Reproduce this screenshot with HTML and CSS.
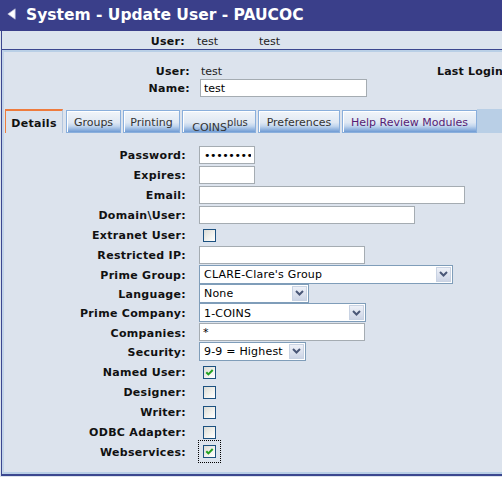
FILE: index.html
```html
<!DOCTYPE html>
<html lang="en">
<head>
<meta charset="utf-8">
<title>System - Update User - PAUCOC</title>
<link rel="stylesheet" href="styles.css">
</head>
<body>
<div class="titlebar">
  <svg class="back" width="9" height="12" viewBox="0 0 9 12"><path d="M8.2 0.8 L8.2 11.2 L0.8 6 Z" fill="#ffffff" stroke="#b8bcd8" stroke-width="0.7"/></svg>
  <h1 class="title">System - Update User - PAUCOC</h1>
</div>
<div class="frame">
  <div class="userbar">
    <span class="lbl">User:</span><span class="val">test</span><span class="val">test</span>
  </div>
  <div class="panel">
    <div class="head">
      <span class="lbl">User:</span><span class="val uval">test</span><span class="lbl">Last Login</span>
      <span class="lbl">Name:</span><span class="cell"><input class="txt w-name" type="text" value="test"></span><span></span>
    </div>
    <div class="tabs">
      <div class="tab active t-details">Details</div>
      <div class="tab t-groups">Groups</div>
      <div class="tab t-printing">Printing</div>
      <div class="tab t-coins"><span class="coins">COINS<sup class="plus">plus</sup></span></div>
      <div class="tab t-pref">Preferences</div>
      <div class="tab t-help">Help Review Modules</div>
      <div class="tabfill"></div>
    </div>
    <div class="form">
      <span class="lbl">Password:</span><span class="cell"><input class="txt w-short pw" type="password" value="abcdefghij"></span>
      <span class="lbl">Expires:</span><span class="cell"><input class="txt w-short" type="text" value=""></span>
      <span class="lbl">Email:</span><span class="cell"><input class="txt w-email" type="text" value=""></span>
      <span class="lbl">Domain\User:</span><span class="cell"><input class="txt w-domain" type="text" value=""></span>
      <span class="lbl">Extranet User:</span><span class="cell"><span class="cb"></span></span>
      <span class="lbl">Restricted IP:</span><span class="cell"><input class="txt w-ip" type="text" value=""></span>
      <span class="lbl">Prime Group:</span><span class="cell"><span class="sel w-pg"><span class="seltext">CLARE-Clare's Group</span><span class="btn"><svg width="9" height="6" viewBox="0 0 9 6"><path d="M1 1 L4.5 4.5 L8 1" fill="none" stroke="#4a5777" stroke-width="2"/></svg></span></span></span>
      <span class="lbl">Language:</span><span class="cell"><span class="sel w-lang"><span class="seltext">None</span><span class="btn"><svg width="9" height="6" viewBox="0 0 9 6"><path d="M1 1 L4.5 4.5 L8 1" fill="none" stroke="#4a5777" stroke-width="2"/></svg></span></span></span>
      <span class="lbl">Prime Company:</span><span class="cell"><span class="sel w-pc"><span class="seltext">1-COINS</span><span class="btn"><svg width="9" height="6" viewBox="0 0 9 6"><path d="M1 1 L4.5 4.5 L8 1" fill="none" stroke="#4a5777" stroke-width="2"/></svg></span></span></span>
      <span class="lbl">Companies:</span><span class="cell"><input class="txt w-ip" type="text" value="*"></span>
      <span class="lbl">Security:</span><span class="cell"><span class="sel w-sec"><span class="seltext">9-9 = Highest</span><span class="btn"><svg width="9" height="6" viewBox="0 0 9 6"><path d="M1 1 L4.5 4.5 L8 1" fill="none" stroke="#4a5777" stroke-width="2"/></svg></span></span></span>
      <span class="lbl">Named User:</span><span class="cell"><span class="cb"><svg width="11" height="11" viewBox="0 0 11 11"><path d="M2.3 5.2 L4.4 7.4 L8.7 3" fill="none" stroke="#21a121" stroke-width="2"/></svg></span></span>
      <span class="lbl">Designer:</span><span class="cell"><span class="cb"></span></span>
      <span class="lbl">Writer:</span><span class="cell"><span class="cb"></span></span>
      <span class="lbl">ODBC Adapter:</span><span class="cell"><span class="cb"></span></span>
      <span class="lbl">Webservices:</span><span class="cell"><span class="focus"><span class="cb"><svg width="11" height="11" viewBox="0 0 11 11"><path d="M2.3 5.2 L4.4 7.4 L8.7 3" fill="none" stroke="#21a121" stroke-width="2"/></svg></span></span></span>
    </div>
  </div>
</div>
</body>
</html>
```
FILE: styles.css
```css
html, body {
  margin: 0;
  padding: 0;
}
body {
  background: #dce3ed;
  font-family: "DejaVu Sans", Verdana, sans-serif;
  font-size: 11px;
  color: #000;
  width: 502px;
  height: 477px;
  overflow: hidden;
}
.titlebar {
  height: 31px;
  background: #3a3f8a;
  display: flex;
  align-items: center;
  padding-left: 7px;
  gap: 10px;
  box-sizing: border-box;
}
.back {
  display: block;
  margin-top: -3px;
}
.title {
  margin: 0;
  font-size: 15.5px;
  font-weight: bold;
  color: #ffffff;
  white-space: nowrap;
  margin-top: -1px;
}
.frame {
  margin-left: 1px;
  border-left: 1px solid #3b478f;
  border-bottom: 2px solid #3b478f;
}
.userbar {
  height: 19px;
  border-bottom: 1px solid #3b478f;
  display: grid;
  grid-template-columns: 183px 50px auto;
  column-gap: 12px;
  align-items: center;
  background: #dce4ee;
  padding-top: 2px;
  box-sizing: border-box;
}
.lbl {
  font-weight: bold;
  text-align: right;
  white-space: nowrap;
  color: #111;
  letter-spacing: 0.3px;
}
.val {
  color: #222;
  white-space: nowrap;
}
.panel {
  border-top: 2px solid #b9cfe6;
  border-left: 2px solid #c3d4e9;
  border-bottom: 2px solid #b9cfe6;
}
.head {
  display: grid;
  grid-template-columns: 186px 227px auto;
  grid-template-rows: 17px 18px;
  column-gap: 10px;
  align-items: center;
  padding-top: 10px;
}
.head .lbl:nth-child(3) {
  text-align: left;
  letter-spacing: 0.2px;
}
.head > .lbl, .head > .val {
  padding-top: 1px;
}
.uval {
  padding-left: 1px;
}
.cell {
  display: flex;
  align-items: center;
}
.txt {
  box-sizing: border-box;
  height: 18px;
  border: 1px solid #a5acb2;
  background: #fff;
  padding: 1px 3px 0;
  margin: 0;
  font-family: "DejaVu Sans", Verdana, sans-serif;
  font-size: 11px;
  color: #000;
  outline: none;
}
.pw {
  font-size: 11px;
  letter-spacing: -0.4px;
  padding-left: 4px;
}
.w-name { width: 167px; }
.w-short { width: 56px; }
.w-email { width: 266px; }
.w-domain { width: 216px; }
.w-ip { width: 166px; }
.w-pg { width: 254px; }
.w-lang { width: 110px; }
.w-pc { width: 167px; }
.w-sec { width: 107px; }

.tabs {
  display: flex;
  margin-top: 12px;
  height: 24px;
  padding-left: 1px;
}
.tab {
  box-sizing: border-box;
  display: flex;
  align-items: center;
  justify-content: center;
  margin-right: 2px;
  margin-top: 1px;
  height: 23px;
  padding-top: 2px;
  border: 1px solid #8aafdc;
  background: linear-gradient(#f1f5fa 0%, #dfe8f3 55%, #c2d6ee 72%, #6f9bd4 100%);
  box-shadow: inset 1px 1px 0 #ffffff;
  color: #333;
  white-space: nowrap;
}
.tab.active {
  margin-top: 0;
  height: 24px;
  margin-right: 3px;
  border: none;
  border-top: 2px solid #ee7b3d;
  border-left: 1px solid #ee7b3d;
  border-right: 1px solid #b3c6de;
  background: #dce3ed;
  box-shadow: none;
  font-weight: bold;
  color: #111;
  padding-top: 2px;
  letter-spacing: 0.3px;
}
.t-details { width: 58px; }
.t-groups { width: 55px; }
.t-printing { width: 57px; }
.t-coins { width: 74px; }
.t-pref { width: 82px; }
.t-help { width: 135px; margin-right: 0; color: #561b74; }
.coins {
  padding-top: 9px;
  padding-left: 2px;
}
.plus {
  font-size: 10px;
  vertical-align: 5px;
  line-height: 0;
}
.tabfill {
  flex: 1;
  background: #b9cfe6;
}

.form {
  display: grid;
  grid-template-columns: 182px 1fr;
  grid-template-rows: 20px 20px 20px 20px 20px 20px 19px 19.5px 19.5px 19px 19.5px 20px 20px 20px 20px 20px;
  column-gap: 13px;
  align-items: center;
  margin-top: 11.5px;
  padding-bottom: 11px;
}
.form .lbl {
  padding-top: 2px;
}
.cb {
  box-sizing: border-box;
  width: 13px;
  height: 13px;
  border: 1px solid #1c5180;
  background: linear-gradient(135deg, #dcdcd6 0%, #f3f3ef 60%, #ffffff 100%);
  margin-left: 4px;
  margin-top: 2px;
  display: flex;
  align-items: center;
  justify-content: center;
}
.cb svg {
  display: block;
}
.focus {
  display: flex;
  box-sizing: border-box;
  width: 23px;
  height: 23px;
  border: 1px dotted #000;
  padding: 4px 0 0 4px;
  margin-left: -1px;
}
.focus .cb {
  margin: 0;
}
.sel {
  box-sizing: border-box;
  height: 19px;
  border: 1px solid #7f9db9;
  background: #fff;
  display: flex;
  align-items: center;
}
.seltext {
  flex: 1;
  padding-left: 4px;
  padding-top: 1px;
  white-space: nowrap;
  overflow: hidden;
  color: #000;
  letter-spacing: 0.2px;
}
.btn {
  box-sizing: border-box;
  width: 15px;
  height: 15px;
  margin: 0 1px;
  border: 1px solid #c9d3e3;
  background: linear-gradient(#eef1f8, #cdd5e6);
  display: flex;
  align-items: center;
  justify-content: center;
}
.btn svg {
  display: block;
}
```
